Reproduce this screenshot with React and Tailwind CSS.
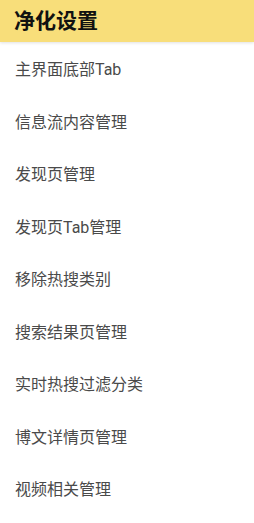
export default function App() {
  const items = [
    "主界面底部Tab",
    "信息流内容管理",
    "发现页管理",
    "发现页Tab管理",
    "移除热搜类别",
    "搜索结果页管理",
    "实时热搜过滤分类",
    "博文详情页管理",
    "视频相关管理",
  ];
  return (
    <div
      className="w-[254px] h-[523px] bg-white overflow-hidden"
      style={{ fontFamily: 'Roboto, "Noto Sans CJK SC", sans-serif' }}
    >
      <div className="h-[42px] bg-[#f8de7a] flex items-center pl-[14px] shadow-[0_1px_3px_rgba(0,0,0,0.12)] relative">
        <span className="text-[21px] font-bold text-[#111] leading-none">净化设置</span>
      </div>
      <div className="pt-[2px]">
        {items.map((t) => (
          <div key={t} className="h-[52.5px] flex items-center pl-[15px]">
            <span className="text-[16px] text-[#4a4a4a] leading-none">{t}</span>
          </div>
        ))}
      </div>
    </div>
  );
}
